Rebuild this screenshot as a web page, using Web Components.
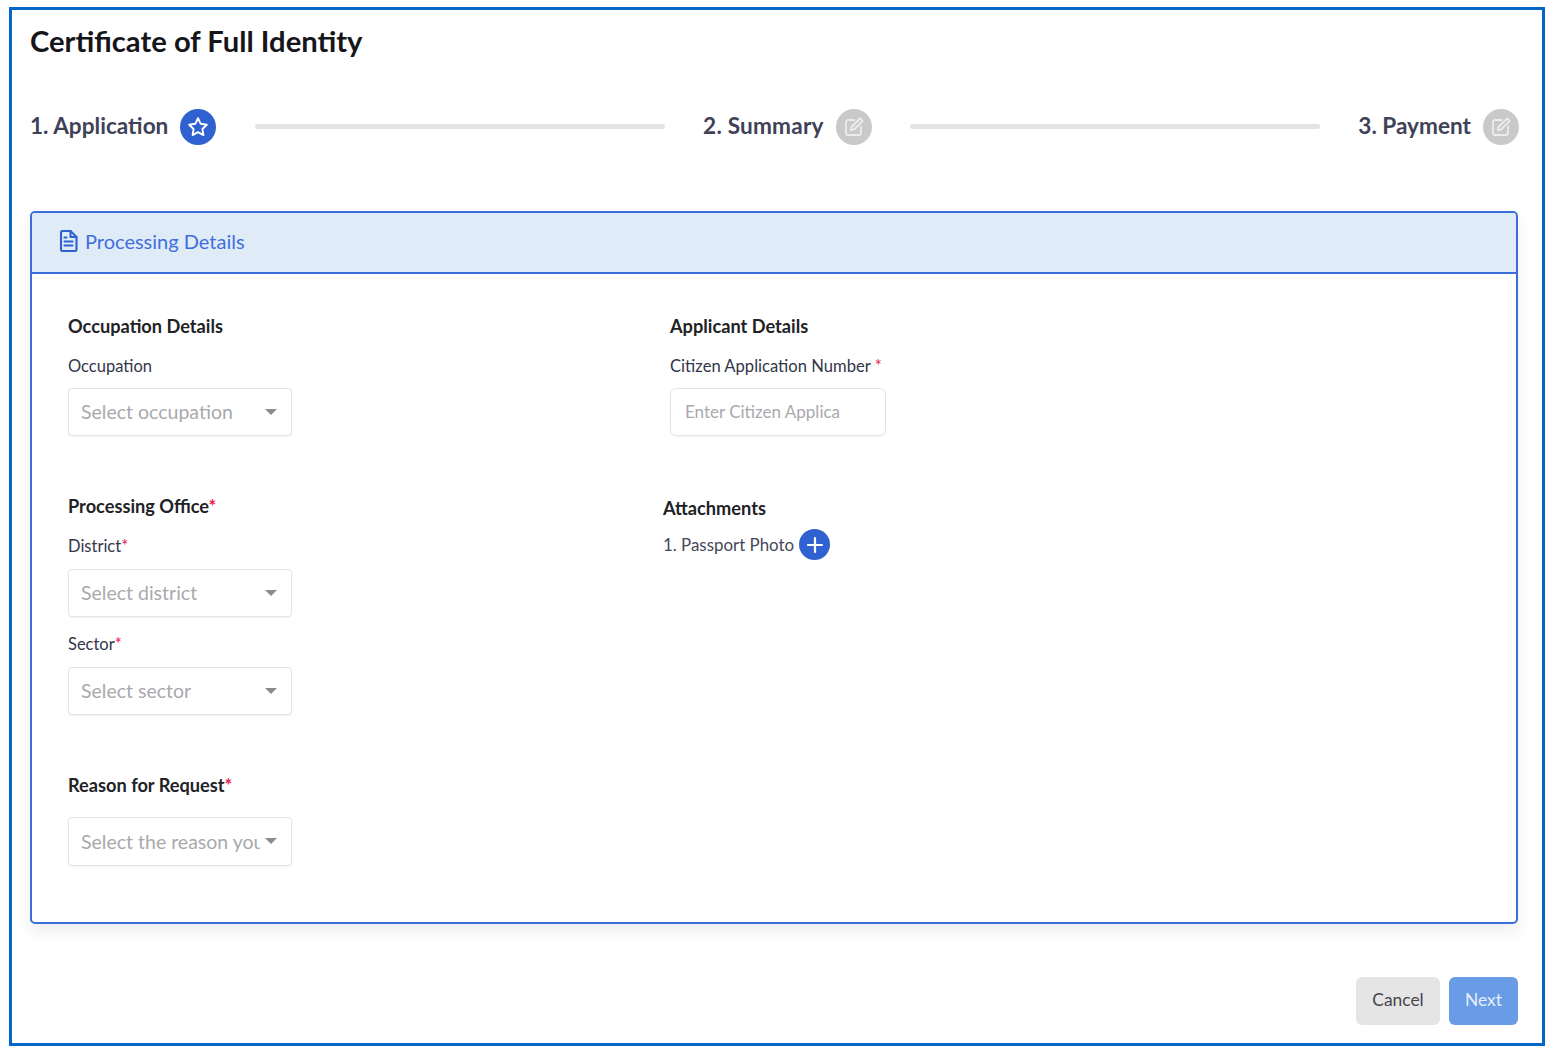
<!DOCTYPE html>
<html>
<head>
<meta charset="utf-8">
<title>Certificate of Full Identity</title>
<style>
  html, body { margin: 0; padding: 0; background: #fff; }
  body { font-family: "Lato", "Liberation Sans", sans-serif; color: #1b1b1f; }
</style>
</head>
<body>
<cert-page>
  <span slot="title">Certificate of Full Identity</span>
  <step-bar slot="steps"></step-bar>
  <form-panel slot="panel" heading="Processing Details">
    <div slot="left">
      <section-head>Occupation Details</section-head>
      <select-field label="Occupation" placeholder="Select occupation" style="--label-top:18px;--box-top:12px"></select-field>
      <section-head required style="--head-top:58px">Processing Office</section-head>
      <select-field label="District" required placeholder="Select district" style="--label-top:18px;--box-top:13px"></select-field>
      <select-field label="Sector" required placeholder="Select sector" style="--label-top:17px;--box-top:13px"></select-field>
      <section-head required style="--head-top:58px">Reason for Request</section-head>
      <select-field placeholder="Select the reason you are applying" narrow style="--box-top:20px;--box-height:49px"></select-field>
    </div>
    <div slot="right">
      <div style="padding-left:7px">
        <section-head>Applicant Details</section-head>
        <input-field label="Citizen Application Number" placeholder="Enter Citizen Application Number"></input-field>
      </div>
      <section-head style="--head-top:60px">Attachments</section-head>
      <attachment-row>1. Passport Photo</attachment-row>
    </div>
  </form-panel>
  <action-button slot="actions" kind="plain">Cancel</action-button>
  <action-button slot="actions" kind="primary">Next</action-button>
</cert-page>

<script>
"use strict";
const STAR_ICON = `<svg viewBox="0 0 24 24" width="24" height="24" fill="none" stroke="#fff" stroke-width="1.9" stroke-linejoin="round"><path d="M12 3.2l2.7 5.600 6.100.9-4.400 4.300 1 6.100-5.400-2.900-5.400 2.900 1-6.100-4.400-4.300 6.100-.9z"/></svg>`;
const EDIT_ICON = `<svg viewBox="0 0 24 24" width="24" height="24" fill="none" stroke="#ececec" stroke-width="1.8" stroke-linecap="round" stroke-linejoin="round"><path d="M12.500 5H6a2 2 0 0 0-2 2v11a2 2 0 0 0 2 2h11a2 2 0 0 0 2-2v-6.500"/><path d="M18.200 3.300l2.500 2.500L12 14.500l-3.200.7.7-3.200z"/></svg>`;

class CertPage extends HTMLElement {
    constructor() {
        super();
        this.attachShadow({ mode: "open" }).innerHTML = `
      <style>
      :host {
        display: flex;
        flex-direction: column;
        box-sizing: border-box;
        height: 1039px;
        margin: 7px 8px 0 9px;
        padding: 13px 24px 0 18px;
        border: 3px solid #0466c8;
      }
      .title {
        font-size: 29.2px;
        line-height: 36px;
        font-weight: 700;
        color: #15151a;
      }
      .steps { display: block; margin-top: 50px; }
      .panel { display: block; margin-top: 66px; }
      .actions {
        display: flex;
        justify-content: flex-end;
        gap: 9px;
        margin-top: 53px;
      }
      </style>
      <div class="title"><slot name="title"></slot></div>
      <div class="steps"><slot name="steps"></slot></div>
      <div class="panel"><slot name="panel"></slot></div>
      <div class="actions"><slot name="actions"></slot></div>`;
    }
}

class StepBar extends HTMLElement {
    constructor() {
        super();
        this.attachShadow({ mode: "open" }).innerHTML = `
      <style>
      :host { display: flex; align-items: center; justify-content: space-between; height: 36px; margin-right: -1px; }
      .step { display: flex; align-items: center; gap: 12px; flex: none; }
      .name { font-size: 22.6px; line-height: 34px; padding-bottom: 2px; font-weight: 700; color: #3f4257; }
      .name.wide { letter-spacing: 0.2px; }
      .dot {
        display: flex;
        align-items: center;
        justify-content: center;
        width: 36px;
        height: 36px;
        border-radius: 50%;
        background: #c9c9c9;
      }
      .dot.on { background: #2f62d0; }
      .line { flex: none; width: 410px; height: 5px; margin: 0 38px 2px; border-radius: 3px; background: #e4e4e4; }
      </style>
      <div class="step"><span class="name">1. Application</span><span class="dot on">${STAR_ICON}</span></div>
      <div class="line"></div>
      <div class="step"><span class="name wide">2. Summary</span><span class="dot">${EDIT_ICON}</span></div>
      <div class="line"></div>
      <div class="step"><span class="name">3. Payment</span><span class="dot">${EDIT_ICON}</span></div>`;
    }
}

class FormPanel extends HTMLElement {
    constructor() {
        super();
        this.attachShadow({ mode: "open" }).innerHTML = `
      <style>
      :host {
        display: block;
        box-sizing: border-box;
        height: 713px;
        border: 2px solid #3b6ed8;
        border-radius: 5px;
        box-shadow: 0 8px 16px rgba(0, 0, 0, 0.07);
      }
      .head {
        display: flex;
        align-items: center;
        gap: 7px;
        box-sizing: border-box;
        height: 61px;
        padding: 0 0 3px 27px;
        background: #e0ebf8;
        border-bottom: 2px solid #3b6ed8;
        border-radius: 3px 3px 0 0;
        font-size: 20px;
        color: #3f6fdc;
      }
      .body {
        display: grid;
        grid-template-columns: 595px 1fr;
        padding: 40px 0 0 36px;
      }
      </style>
      <div class="head">
        <svg viewBox="1 1 18 22" width="19" height="22" fill="none" stroke="#2f62d0" stroke-width="2.1" stroke-linejoin="round" stroke-linecap="round"><path d="M4 2h8l6 6v12.500a1.500 1.500 0 0 1-1.500 1.500h-12.500a1.500 1.500 0 0 1-1.500-1.500v-17a1.500 1.500 0 0 1 1.500-1.500z"/><path d="M12 2v6h6"/><path d="M6 12.500h8M6 16.500h8M6 8.500h2"/></svg>
        <span>${this.getAttribute("heading")}</span>
      </div>
      <div class="body">
        <div><slot name="left"></slot></div>
        <div><slot name="right"></slot></div>
      </div>`;
    }
}

class SectionHead extends HTMLElement {
    constructor() {
        super();
        const star = this.hasAttribute("required") ? `<span class="req">*</span>` : "";
        this.attachShadow({ mode: "open" }).innerHTML = `
      <style>
      :host {
        display: block;
        margin-top: var(--head-top, 0);
        font-size: 18.2px;
        line-height: 24px;
        font-weight: 700;
        color: #222226;
      }
      .req { color: #e8224f; font-weight: 700; }
      </style>
      <slot></slot>${star}`;
    }
}

class SelectField extends HTMLElement {
    constructor() {
        super();
        const label = this.getAttribute("label");
        const star = this.hasAttribute("required") ? `<span class="req">*</span>` : "";
        const width = this.hasAttribute("narrow") ? 179 : 172;
        this.attachShadow({ mode: "open" }).innerHTML = `
      <style>
      :host { display: block; }
      .label {
        margin-top: var(--label-top, 0);
        font-size: 16.5px;
        line-height: 20px;
        color: #34364a;
      }
      .req { color: #e8224f; }
      .box {
        display: flex;
        align-items: center;
        box-sizing: border-box;
        width: 224px;
        height: var(--box-height, 48px);
        margin-top: var(--box-top, 0);
        padding: 0 14px 1px 12px;
        border: 1px solid #e4e4e6;
        border-radius: 4px;
        background: #fff;
        box-shadow: 0 1px 2px rgba(0, 0, 0, 0.05);
      }
      .text {
        width: ${width}px;
        overflow: hidden;
        white-space: nowrap;
        font-size: 19.5px;
        color: #a9a9ad;
      }
      .caret {
        margin-left: auto;
        width: 0;
        height: 0;
        border-left: 6px solid transparent;
        border-right: 6px solid transparent;
        border-top: 6px solid #8c8c8c;
      }
      </style>
      ${label ? `<div class="label">${label}${star}</div>` : ""}
      <div class="box"><span class="text">${this.getAttribute("placeholder")}</span><span class="caret"></span></div>`;
    }
}

class InputField extends HTMLElement {
    constructor() {
        super();
        this.attachShadow({ mode: "open" }).innerHTML = `
      <style>
      :host { display: block; }
      .label { margin-top: 18px; font-size: 16.6px; line-height: 20px; color: #34364a; }
      .req { color: #e8224f; margin-left: 4px; }
      .box {
        box-sizing: border-box;
        width: 216px;
        height: 48px;
        margin-top: 12px;
        padding: 0 0 0 14px;
        border: 1px solid #e4e4e6;
        border-radius: 6px;
        line-height: 45px;
        font-size: 17px;
        color: #a9a9ad;
        box-shadow: 0 1px 2px rgba(0, 0, 0, 0.05);
      }
      .text { display: block; width: 155px; overflow: hidden; white-space: nowrap; }
      </style>
      <div class="label">${this.getAttribute("label")}<span class="req">*</span></div>
      <div class="box"><span class="text">${this.getAttribute("placeholder")}</span></div>`;
    }
}

class AttachmentRow extends HTMLElement {
    constructor() {
        super();
        this.attachShadow({ mode: "open" }).innerHTML = `
      <style>
      :host {
        display: flex;
        align-items: center;
        gap: 5px;
        margin-top: 9px;
        font-size: 16.9px;
        color: #45475a;
      }
      .add {
        display: flex;
        align-items: center;
        justify-content: center;
        width: 31px;
        height: 31px;
        border-radius: 50%;
        background: #2f62d0;
      }
      </style>
      <slot></slot>
      <span class="add">
        <svg viewBox="0 0 18 18" width="18" height="18" stroke="#fff" stroke-width="2.2" stroke-linecap="round"><path d="M9 2v14M2 9h14"/></svg>
      </span>`;
    }
}

class ActionButton extends HTMLElement {
    constructor() {
        super();
        const primary = this.getAttribute("kind") === "primary";
        this.attachShadow({ mode: "open" }).innerHTML = `
      <style>
      :host {
        display: flex;
        align-items: center;
        justify-content: center;
        box-sizing: border-box;
        height: 48px;
        width: ${primary ? 69 : 84}px;
        padding-bottom: 3px;
        border-radius: 6px;
        font-size: 17.4px;
        background: ${primary ? "#6a9be6" : "#e5e5e5"};
        color: ${primary ? "#e6effb" : "#45454d"};
      }
      </style>
      <slot></slot>`;
    }
}

customElements.define("cert-page", CertPage);
customElements.define("step-bar", StepBar);
customElements.define("form-panel", FormPanel);
customElements.define("section-head", SectionHead);
customElements.define("select-field", SelectField);
customElements.define("input-field", InputField);
customElements.define("attachment-row", AttachmentRow);
customElements.define("action-button", ActionButton);
</script>
</body>
</html>
